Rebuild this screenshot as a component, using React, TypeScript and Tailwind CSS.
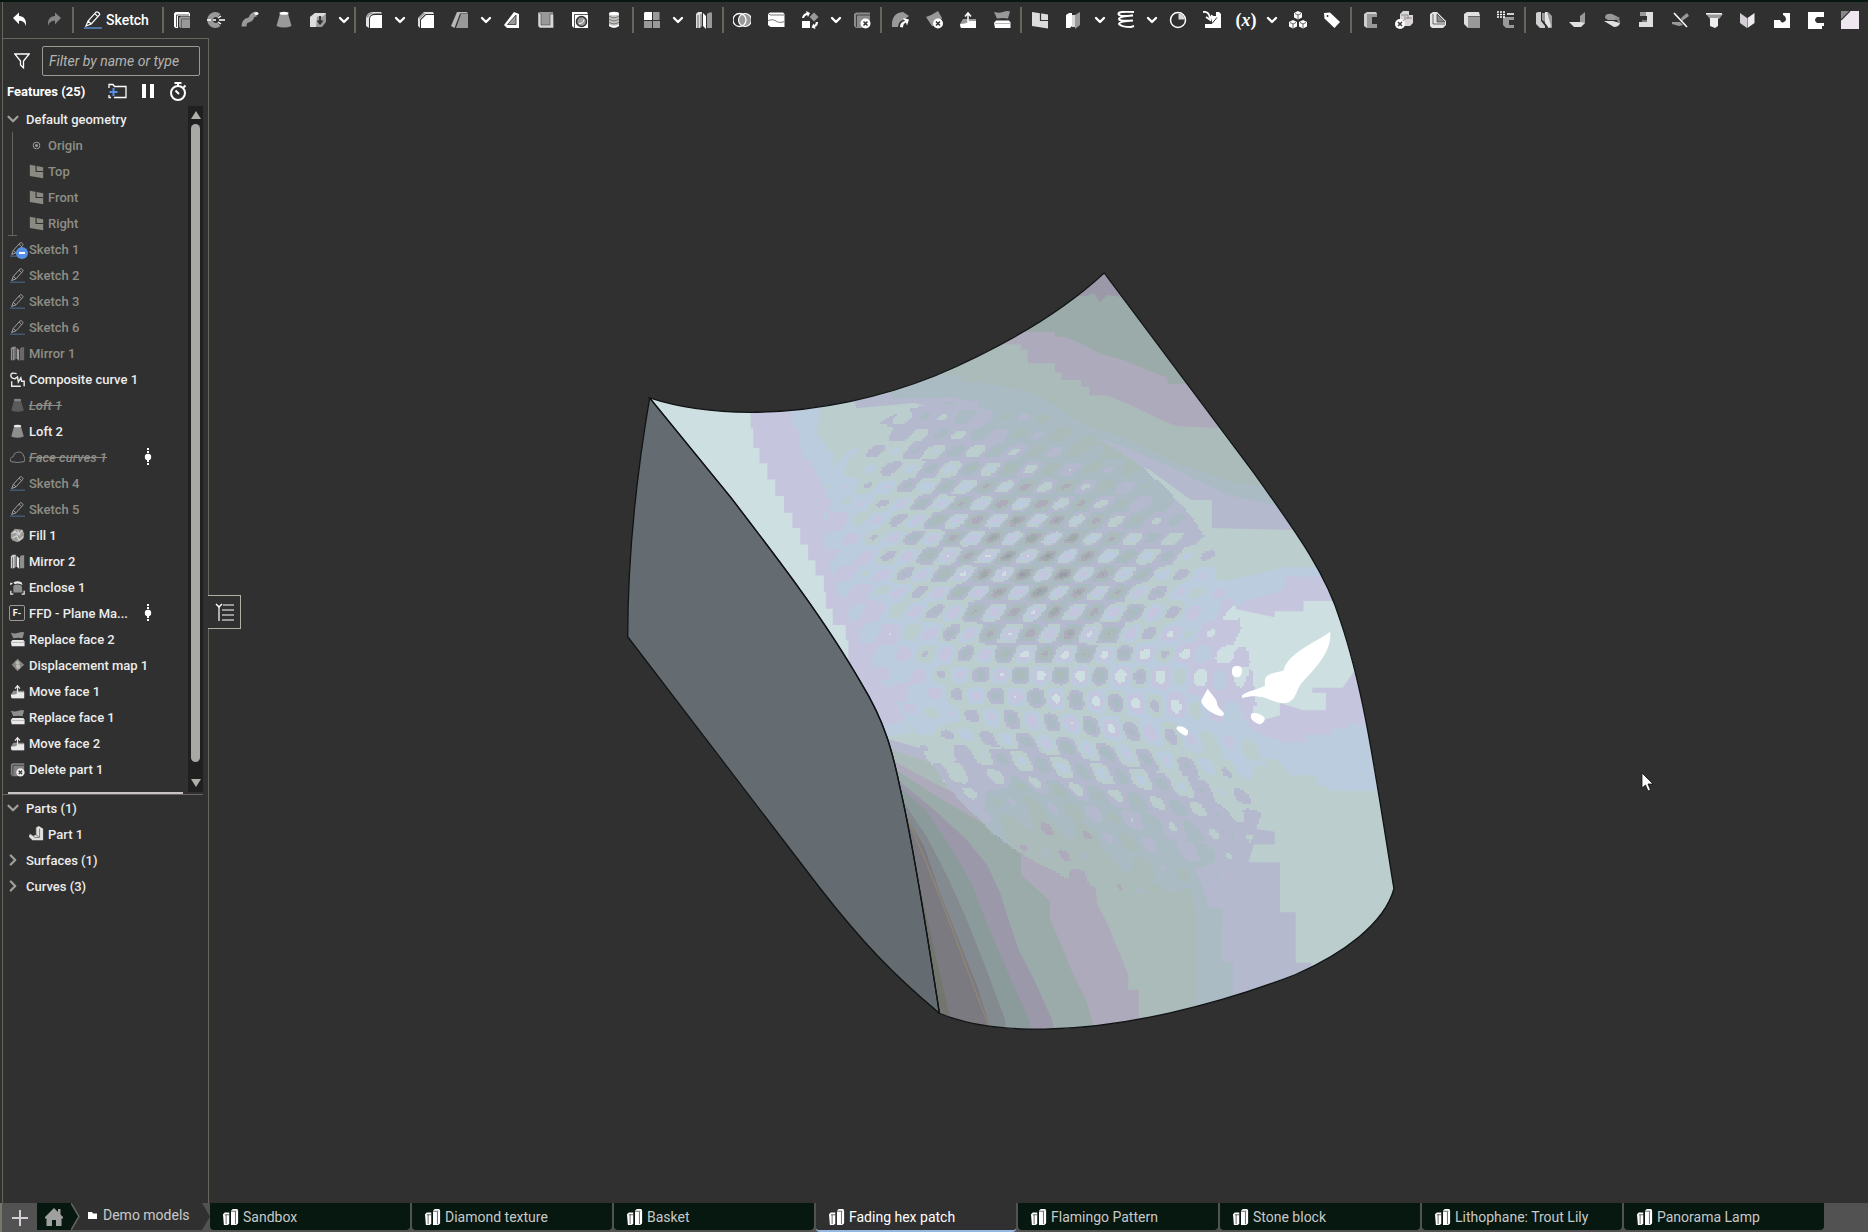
import React, { useState } from 'react';
import { clsx } from 'clsx';
import { ChevronDown, ChevronRight } from 'lucide-react';

const W = '#ffffff';
const G = '#999999';
const D = '#303030';

// All tool glyphs share an 18x18 grid
const glyphs: Record<string, React.ReactNode> = {
  undo: <path d="M2 7 8 1.500v3.600c5 .2 7.600 3.500 7 9.900-1.300-3.600-3-5.200-7-5.200v3.400z" fill={W} />,
  redo: <path d="M16 7 10 1.500v3.600c-5 .2-7.600 3.500-7 9.900 1.300-3.600 3-5.200 7-5.200v3.400z" fill="#858585" />,
  sketch: (
    <>
      <path d="M2 15 4 10 12 1.200q1-.8 2 0l1.200 1q.9 1 0 2L7.200 13z M4 10l3.200 3M10.800 2.600l3 3" fill="none" stroke={W} strokeWidth="1.200" />
      <path d="M0 17h18" stroke="#5b8fd9" strokeWidth="1.400" />
    </>
  ),
  extrude: (
    <>
      <path d="M1 2.500 2.500 1h13L17 2.500V5H5v12H2.500L1 15.500z" fill={W} />
      <path d="M3.500 16V4H16" fill="none" stroke={D} strokeWidth=".8" />
      <path d="M6 7 7.500 5.500H17V17H7.500L6 15.500z" fill={G} />
      <path d="M8.500 17V8H17" fill="none" stroke="#555" strokeWidth=".8" />
    </>
  ),
  revolve: (
    <>
      <path d="M13.500 3A8 8 0 1 0 13.500 15L10.500 11.500A3 3 0 1 1 10.500 6.500z" fill={G} />
      <path d="M0 9h4m2 0h3m3 0h6M11 7l3-2M11 11l3 2" stroke={W} strokeWidth="1.400" />
    </>
  ),
  sweep: (
    <>
      <path d="M3 15.500C3 7 8.500 10.500 10 7.500c.8-2 1-4 5.500-4.500" fill="none" stroke={G} strokeWidth="5" />
      <ellipse cx="15.500" cy="2.500" rx="2" ry="1.500" fill={W} />
    </>
  ),
  loft: (
    <>
      <path d="M5 2.500h8L16.500 15q-7.500 3-15 0z" fill={G} />
      <ellipse cx="9" cy="2.300" rx="4.500" ry="1.500" fill={W} />
    </>
  ),
  thicken: (
    <>
      <path d="M1 6 6 2h11v9l-4 5H1z" fill={G} />
      <path d="M1 6 6 2h11l-3 3.500H8L7 16H1z" fill="#dcdcdc" />
      <path d="M11 5v7M8.500 9.500 11 12.500l2.500-3" stroke={D} strokeWidth="1.800" fill="none" />
    </>
  ),
  fillet: (
    <>
      <path d="M5 17V8q0-4 5-4h7v13z" fill={W} />
      <path d="M1 15V7q1-6 7-6h8l1 1.500H10Q4.500 3 4 8v9z" fill="#e2e2e2" />
      <path d="M2.500 6.500Q3 2.500 7.500 2" stroke={G} strokeWidth="1.500" fill="none" />
    </>
  ),
  chamfer: (
    <>
      <path d="M4 17V9l5-5h8v13z" fill={W} />
      <path d="M1 15V7l6-6h9l1 2H8.500L3 8.500V17z" fill="#dedede" />
      <path d="M2 7.500 7.500 2" stroke={G} strokeWidth="1.200" />
    </>
  ),
  draft: (
    <>
      <path d="M5 17 10 3h7v14z" fill={G} />
      <path d="M0 15 6 1h10l1 1.500H9L3.500 17z" fill="#b8b8b8" />
    </>
  ),
  rib: (
    <>
      <path d="M1 14 11 1l5 2v14H4z" fill={W} />
      <path d="M4.500 13.500 13 4v9.500z" fill={G} stroke={D} strokeWidth=".8" />
    </>
  ),
  shell: (
    <>
      <path d="M1 1h15l1 16H3L1 15z" fill={G} />
      <path d="M4 3v11h9V3h3.500v14H3L1 15V1z" fill="#d6d6d6" stroke={D} strokeWidth=".5" />
    </>
  ),
  hole: (
    <>
      <path d="M1 1h15l1 2v14H3L1 15z" fill={W} />
      <path d="M3.500 17V3.500H17" stroke={D} strokeWidth=".8" fill="none" />
      <circle cx="10.500" cy="10.500" r="5" fill={G} stroke="#333" strokeWidth="1.500" />
      <path d="M8 12.500a5 5 0 0 0 5-4" stroke={W} strokeWidth="1" fill="none" />
    </>
  ),
  thread: (
    <>
      <path d="M4 2h10v13q-5 3.500-10 0z" fill="#c4c4c0" />
      <path d="M4 5.500q5 3 10 0M4 8.500q5 3 10 0M4 11.500q5 3 10 0" stroke="#777" strokeWidth="1" fill="none" />
      <ellipse cx="9" cy="2.500" rx="5" ry="1.800" fill={W} />
      <path d="M4 13.500q5 2.500 10 0V15q-5 3.500-10 0z" fill={W} />
    </>
  ),
  pattern: (
    <>
      <path d="M1 2 2 1h7v8H1z" fill={W} />
      <path d="M10 1h6.500v8H10zM1 10h8v7H1zM10 10h7v7h-7z" fill={G} />
    </>
  ),
  mirror: (
    <>
      <path d="M1 3 3 1h4v14l-2 2H1z" fill="#e0e0e0" />
      <path d="M3 4v13M6 3v13" stroke={D} strokeWidth=".7" />
      <path d="M8 2l3 3v13l-3-3z" fill={W} />
      <path d="M12 3l2-1.500h3V17h-5z" fill={G} />
    </>
  ),
  boolean: (
    <>
      <circle cx="12" cy="9" r="6.500" fill={G} />
      <circle cx="6.500" cy="9" r="6.500" fill="none" stroke={W} strokeWidth="1.300" />
      <circle cx="12" cy="9" r="6.500" fill="none" stroke={W} strokeWidth="1.200" />
    </>
  ),
  split: (
    <>
      <path d="M1 3 3 1.500h13L17.500 3v13H3.500L1 14z" fill={W} />
      <path d="M1 9.500q5-2 8 .5t8.500.5M3.500 4h14M3.500 4 1.500 3" stroke="#777" strokeWidth="1" fill="none" />
    </>
  ),
  transform: (
    <>
      <path d="M1 10h8v7H1z" fill={W} />
      <path d="M13 1.500 17.500 6 13 10.500 8.500 6z" fill={G} />
      <path d="M1 7Q2 2.500 5.500 2l-.5-2 4 2-2 4-.8-2Q3.500 4.500 3 7zM17 11q0 4-3 5l.5 2-4-1.500 2-4 .8 1.500q1.500-.5 1.500-3z" fill={W} />
    </>
  ),
  deletePart: (
    <>
      <path d="M1 3 3 1.500h14V10L9 17H3L1 15z" fill="#8b8b8b" />
      <path d="M3.500 16V4H17" stroke={D} strokeWidth=".8" fill="none" />
      <circle cx="12.500" cy="12.500" r="5" fill={W} />
      <path d="m10.500 10.500 4 4m0-4-4 4" stroke={D} strokeWidth="1.500" />
    </>
  ),
  modifyFillet: (
    <>
      <path d="M1 16Q0 2 12 1l6 4-5 4q-5 0-6 7z" fill={G} />
      <path d="M9 16Q9 11 14 10l-2-3 6 1.500-2 6-1-3q-3 1-3 5z" fill={W} />
    </>
  ),
  deleteFace: (
    <>
      <path d="M1 6Q7 4 13 0l4 7-4 8H7z" fill={G} />
      <circle cx="13" cy="12.500" r="5" fill={W} />
      <path d="m11 10.500 4 4m0-4-4 4" stroke={D} strokeWidth="1.500" />
    </>
  ),
  moveFace: (
    <>
      <path d="M1 13 4 8h13v9H3l-2-1z" fill={G} />
      <path d="M1 13q7 0 9-3h7v7H2z" fill={W} />
      <path d="M9 11V3M6 5.500 9 2l3 3.500" stroke={W} strokeWidth="1.500" fill="none" />
    </>
  ),
  replaceFace: (
    <>
      <path d="M1 1q5 1.500 9 0t7-.5l-2 7q-5-1-11 0z" fill={G} />
      <path d="M1 12 3 9.500h13l1.500 2V17H2z" fill={W} />
      <path d="M2 12.500h15" stroke={G} strokeWidth=".7" />
    </>
  ),
  plane: (
    <>
      <path d="M1 1l16 2.500v14L1 15z" fill="#dcdcdc" />
      <path d="M9.500 2v7.500H17.500" stroke={D} strokeWidth="1.200" fill="none" />
    </>
  ),
  planeSmall: (
    <>
      <path d="M1 1l16 3v13L1 14.500z" fill="#8a8a82" />
      <path d="M8.500 2.500v6.500H17" stroke={D} strokeWidth="1.400" fill="none" />
    </>
  ),
  section: (
    <>
      <path d="M1 4 4 2h3v13l-2 2H1z" fill={W} />
      <path d="M7 4h4v12H7z" fill="#d8d8d8" />
      <path d="m10 4 5-3v13l-5 4z" fill={G} />
    </>
  ),
  helix: (
    <path d="M17 1Q1 0 1.500 3T16 4.500M16 4.500Q2 5.500 2 8t14 1.500M16 9.500Q2 10.500 2 13q2 3 12 3l3-1" stroke={W} strokeWidth="2" fill="none" />
  ),
  stopwatch: (
    <>
      <circle cx="9" cy="9" r="7.500" fill="none" stroke={W} strokeWidth="1.500" />
      <path d="M9.500 2.500v6h6A6 6 0 0 0 9.500 2.500z" fill="#dcd6dc" />
    </>
  ),
  derived: (
    <>
      <path d="M9 5h4V1h3l2 2v14H2v-5l7 1z" fill={W} />
      <path d="M0 1q6-1 7 6M9 4 7.500 9 3 6" stroke={W} strokeWidth="1.800" fill="none" />
      <path d="M2 12.500h7l5-6" stroke={D} fill="none" strokeWidth="1" />
    </>
  ),
  group: (
    <>
      <path d="m9 0 4 2v4.500L9 8.500l-4-2V2zM4 9l4 2v4.500l-4 2-4-2V11zM14 9l4 2v4.500l-4 2-4-2V11z" fill={W} />
      <path d="m6 2.500 3 1.500 3-1.500M9 4v4M1 11.500 4 13l3-1.500M4 13v4M11 11.500l3 1.500 3-1.500M14 13v4" stroke="#555" strokeWidth=".9" fill="none" />
    </>
  ),
  tag: (
    <>
      <path d="M1 2 7 1.500 17 11 11.500 17 1.500 7.500z" fill={W} />
      <circle cx="4.500" cy="5" r="1" fill={D} />
    </>
  ),
  frame: (
    <>
      <path d="M4 4 6 2h10v4h-5v7h5v4H6l-2-2z" fill={G} />
      <path d="M3 3 6 1h9l1 2H6v14l-3-2z" fill="#cfcfcf" />
    </>
  ),
  cubes: (
    <>
      <path d="M5 3 8 0h6v4h4v8l-3 3H9V9H5z" fill="#d9d5d9" />
      <path d="M6 4h7v4M10 5v4M11 7h6" stroke="#777" strokeWidth=".8" fill="none" />
      <circle cx="5" cy="13" r="5" fill={W} />
      <path d="m3 11 4 4m0-4-4 4" stroke={D} strokeWidth="1.400" />
    </>
  ),
  bracket: (
    <>
      <path d="M1 3 4 1h4l9 9v4l-3 3H3l-2-2z" fill="#e4e4e4" />
      <path d="M8 3v8h8z" fill="#8a8a8a" stroke={D} strokeWidth=".7" />
      <path d="M4 3v10h12" stroke={D} strokeWidth=".7" fill="none" />
    </>
  ),
  box: (
    <>
      <path d="M1 3 4 1h12l1 4H5v12l-4-4z" fill="#e0e0e0" />
      <path d="M5 5.500h12V17H5z" fill={G} />
    </>
  ),
  frameGrid: (
    <>
      <path d="M6 6h11v3h-5v5h5v3H9L6 14z" fill={G} />
      <path d="M10 2h7v2h-7z" fill="#cfcfcf" />
      <path d="M0 1h8M0 3.500h8M0 6h8" stroke={W} strokeWidth="1.500" strokeDasharray="2 1" />
    </>
  ),
  sheet: (
    <>
      <path d="M1 2 3 1h3v9l4 5v2H5l-4-4z" fill="#cfcfcf" />
      <path d="M7 2h3v9l-3-2z" fill={G} />
      <path d="M10 1h3l4 4v12h-4z" fill={G} />
      <path d="M10 1h2l4 14-2 2-4-5z" fill="#e4e4e4" />
    </>
  ),
  flange: (
    <>
      <path d="M11 5 16 1v11l-5 4z" fill={G} />
      <path d="M0 11h11l5 1-4 4H5z" fill="#e0e0e0" />
    </>
  ),
  hem: (
    <>
      <path d="M2 7q0-5 7-4l8 4-3 2H5z" fill={G} />
      <path d="M1 10h9l7 2q-1 4-6 4z" fill="#e0e0e0" />
      <path d="M12 7q5 2 4 5" stroke="#888" strokeWidth="2" fill="none" />
    </>
  ),
  jog: (
    <>
      <path d="M3 1h7v4H3z" fill={G} />
      <path d="M9 1h7v15H2v-5h8V5H9z" fill="#dedede" />
      <path d="M5 10h5" stroke="#777" strokeWidth="2" />
    </>
  ),
  bend: (
    <>
      <path d="M10 7 16 2l2 3-7 5zM1 11h8l3 3-4 1-7-2z" fill={G} />
      <path d="m3 2 13 14" stroke={W} strokeWidth="1.500" />
    </>
  ),
  form: (
    <>
      <path d="M1 3h17l-4 5H5z" fill="#999" />
      <path d="M1 2h16v1.500H1zM5 7h8v8l-3 2-5-2z" fill="#eee" />
    </>
  ),
  loftSheet: (
    <>
      <path d="m1 2 7 5v10l-7-5z" fill="#d4cfd4" />
      <path d="m8.500 7 7-5v10l-7 5z" fill="#efeaef" />
    </>
  ),
  corner: <path d="M1 9h6q2 5 6 0 0-4-3-5V2h7v15H1z" fill={W} />,
  relief: <path d="M1 1h16v5h-7q-4 3 0 6h7v3h-2v3H1z" fill={W} />,
  tab: (
    <>
      <path d="M0 0h18v18H0z" fill="#efe7ef" />
      <path d="M0 0h9L0 9z" fill="#888" />
      <path d="M0 9 9 0" stroke={D} strokeWidth="1.200" />
    </>
  ),
  // feature list only
  origin: (
    <>
      <circle cx="9" cy="9" r="4" fill="none" stroke="#9a9a92" strokeWidth="1.200" />
      <circle cx="9" cy="9" r="1.800" fill="#9a9a92" />
    </>
  ),
  composite: (
    <path d="M8 2Q1 0 1 4t5 4l3-2 1 6 3-5 1 4h3v6M2 11v6h11" fill="none" stroke={W} strokeWidth="1.700" />
  ),
  faceCurves: <path d="M1 14Q-1 9 4 8q0-4 4-5 6-2 8 3 3 5 1 8-7 2-16 0z" fill="none" stroke={W} strokeWidth="1.200" />,
  fill: (
    <>
      <path d="M1 6 6 1l9 1 2 5-1 6-7 4-6-2-2-3z" fill="#a9a7a4" />
      <path d="m2 7 4-3 4 4 5-5M3 12l5-3 3 6 5-5M9 3l3 6" stroke="#e8e4e8" strokeWidth="1.300" fill="none" />
    </>
  ),
  enclose: (
    <>
      <path d="M4 7q5-3 10 0l1 8H4z" fill={G} />
      <path d="M4 3q5-3 10 0l1 3q-5-3-9-1z" fill={W} />
      <path d="M1 6V4h2M1 13v4h3M17 13v4h-3" fill="none" stroke={W} strokeWidth="1.500" />
    </>
  ),
  displacement: (
    <>
      <path d="M9 1 17 8 9 16 2 8z" fill="#8f8f8c" />
      <path d="m9 3 3 3-3 2-3-2zM7 8h5v5H8z" fill="#c9c9c4" />
    </>
  ),
  part: (
    <>
      <path d="M9 2 12 0l5 3v13H5l-4-4 1-3 4 2 3-1z" fill="#e0e0dc" />
      <path d="M9 2v8l3 2M3 9l5 4h5V3" stroke="#666" strokeWidth=".9" fill="none" />
    </>
  ),
  studio: (
    <>
      <path d="M0 6 2 4h5v13l-2 1H1z" fill={W} />
      <path d="M9 2l2-2h5l1 2v14l-2 2H9z" fill={W} />
      <path d="M2 6.500h5M3.500 6.500V17M9 2.500h6M14 3v14" stroke="#333" strokeWidth=".8" />
    </>
  ),
};

const Glyph = ({ name, className }: { name: string; className?: string }) => (
  <svg viewBox="0 0 18 18" className={clsx('shrink-0', className)} aria-hidden="true">
    {glyphs[name]}
  </svg>
);

// "|" is a separator, "v" a menu arrow, anything else a glyph
const tools = (
  '| extrude revolve sweep loft thicken v | fillet v chamfer draft v rib shell hole thread | pattern v mirror | ' +
  'boolean split transform v deletePart | modifyFillet deleteFace moveFace replaceFace | plane section v helix v ' +
  'stopwatch derived variable v group tag | frame cubes bracket box frameGrid | sheet flange hem jog bend form ' +
  'loftSheet corner relief tab'
).split(' ');

const Separator = () => <span className="mx-px h-[26px] w-[2px] shrink-0 bg-[#66665e]" />;

const ToolButton = ({ name }: { name: string }) => (
  <button type="button" aria-label={name} className="flex h-8 w-[34px] shrink-0 items-center justify-center">
    {name === 'variable' ? (
      <span className="font-['Liberation_Serif',serif] text-lg leading-none font-bold text-white">
        (<i>x</i>)
      </span>
    ) : (
      <Glyph name={name} className="h-[18px] w-[18px]" />
    )}
  </button>
);

const Toolbar = () => (
  <header className="flex h-9 shrink-0 items-center overflow-hidden bg-[#303030] pl-[2px]">
    <span className="h-full w-px shrink-0 bg-[#66665e]" />
    <ToolButton name="undo" />
    <ToolButton name="redo" />
    <Separator />
    <button type="button" className="flex h-8 w-[86px] shrink-0 items-center gap-1 pl-[9px] text-sm font-medium text-white">
      <Glyph name="sketch" className="h-[18px] w-[18px]" />
      Sketch
    </button>
    {tools.map((t, i) => {
      if (t === '|') return <Separator key={i} />;
      if (t === 'v') {
        return (
          <button key={i} type="button" aria-label="More" className="flex h-8 w-[18px] shrink-0 items-center justify-center">
            <ChevronDown className="h-4 w-4 text-white" strokeWidth={3.5} />
          </button>
        );
      }
      return <ToolButton key={i} name={t} />;
    })}
  </header>
);

interface Feature {
  name: string;
  icon: string;
  hidden?: boolean;
  suppressed?: boolean;
  marker?: boolean;
  badge?: boolean;
}

const features: Feature[] = [
  { name: 'Sketch 1', icon: 'sketch', hidden: true, badge: true },
  { name: 'Sketch 2', icon: 'sketch', hidden: true },
  { name: 'Sketch 3', icon: 'sketch', hidden: true },
  { name: 'Sketch 6', icon: 'sketch', hidden: true },
  { name: 'Mirror 1', icon: 'mirror', hidden: true },
  { name: 'Composite curve 1', icon: 'composite' },
  { name: 'Loft 1', icon: 'loft', suppressed: true },
  { name: 'Loft 2', icon: 'loft' },
  { name: 'Face curves 1', icon: 'faceCurves', suppressed: true, marker: true },
  { name: 'Sketch 4', icon: 'sketch', hidden: true },
  { name: 'Sketch 5', icon: 'sketch', hidden: true },
  { name: 'Fill 1', icon: 'fill' },
  { name: 'Mirror 2', icon: 'mirror' },
  { name: 'Enclose 1', icon: 'enclose' },
  { name: 'FFD - Plane Ma...', icon: 'ffd', marker: true },
  { name: 'Replace face 2', icon: 'replaceFace' },
  { name: 'Displacement map 1', icon: 'displacement' },
  { name: 'Move face 1', icon: 'moveFace' },
  { name: 'Replace face 1', icon: 'replaceFace' },
  { name: 'Move face 2', icon: 'moveFace' },
  { name: 'Delete part 1', icon: 'deletePart' },
];

const FeatureRow = ({ feature }: { feature: Feature }) => {
  const dim = feature.hidden || feature.suppressed;
  return (
    <li className="flex h-[26px] items-center pr-9 pl-[6px]">
      <button type="button" className="flex min-w-0 flex-1 items-center gap-1 text-left whitespace-nowrap">
        <span className="relative flex h-4 w-4 shrink-0 items-center justify-center">
          {feature.icon === 'ffd' ? (
            <span className="flex h-4 w-4 items-center justify-center rounded-xs border border-[#9a9a92] text-[9px] leading-none font-bold text-white">
              F-
            </span>
          ) : (
            <Glyph
              name={feature.icon}
              className={clsx('h-[15px] w-[15px]', feature.suppressed ? 'opacity-40' : feature.hidden ? 'opacity-55' : 'opacity-90')}
            />
          )}
          {feature.badge && (
            <span className="absolute top-[6px] left-[7px] flex h-3 w-3 items-center justify-center rounded-full bg-[#5590e6]">
              <span className="h-[2px] w-[6px] bg-white" />
            </span>
          )}
        </span>
        <span className={clsx(dim ? 'text-[#8e8e86]' : 'text-[#ececec]', feature.suppressed && 'italic line-through')}>
          {feature.name}
        </span>
      </button>
      {feature.marker && (
        <svg viewBox="0 0 8 20" className="h-5 w-2 shrink-0" aria-hidden="true">
          <path d="M4 1v18" stroke="#fff" strokeWidth="2" strokeDasharray="2 1" />
          <circle cx="4" cy="10" r="3.200" fill="#fff" />
        </svg>
      )}
    </li>
  );
};

const SectionToggle = ({ label, open, onClick }: { label: string; open: boolean; onClick?: () => void }) => {
  const Chevron = open ? ChevronDown : ChevronRight;
  return (
    <button type="button" onClick={onClick} aria-expanded={open} className="flex h-[26px] w-full items-center gap-1 pl-px text-[#ececec]">
      <Chevron className="h-[18px] w-[18px] text-[#a0a098]" strokeWidth={3} />
      {label}
    </button>
  );
};

const FeaturePanel = () => {
  const [filter, setFilter] = useState('');
  const [partsOpen, setPartsOpen] = useState(true);

  return (
    <aside className="flex w-[207px] shrink-0 flex-col border-t border-r border-l border-[#66665e] text-[13px] leading-none font-medium text-white">
      <div className="flex items-center gap-3 pt-[7px] pr-2 pl-[11px]">
        <svg viewBox="0 0 16 16" className="h-4 w-4 shrink-0" aria-hidden="true">
          <path d="M.8 1h14.400L9.500 8v6.800L6.500 12V8z" fill="none" stroke="#fff" strokeWidth="1.300" />
        </svg>
        <input
          type="text"
          aria-label="Filter features"
          value={filter}
          onChange={(e) => setFilter(e.target.value)}
          placeholder="Filter by name or type"
          className="h-[30px] min-w-0 flex-1 rounded-xs border border-[#9a9a92] bg-transparent px-[6px] text-sm font-normal italic placeholder:text-[#b4b4b0] focus:outline-none"
        />
      </div>

      <div className="flex h-[30px] items-center pl-1">
        <h2 className="w-[101px] font-bold">Features (25)</h2>
        <button type="button" aria-label="Add folder" className="w-[33px]">
          <svg viewBox="0 0 19 16" className="h-4 w-[19px]" aria-hidden="true">
            <path d="M1 5V1.500h4l1.500 2H18v11H6M1 12v2.500h2" fill="none" stroke="#fff" strokeWidth="1.300" />
            <path d="M5.500 5v8M1.500 9h8" stroke="#5590e6" strokeWidth="2" />
          </svg>
        </button>
        <button type="button" aria-label="Pause" className="w-7">
          <svg viewBox="0 0 14 14" className="h-[14px] w-[14px]" aria-hidden="true">
            <path d="M1 0h4v14H1zM9 0h4v14H9z" fill="#fff" />
          </svg>
        </button>
        <button type="button" aria-label="Regeneration time">
          <svg viewBox="0 0 18 19" className="h-[19px] w-[18px]" aria-hidden="true">
            <circle cx="9" cy="11" r="7" fill="none" stroke="#fff" strokeWidth="2" />
            <path d="M5.500 1h7M9 1v3M14.500 5.500 16.500 3.500M6.500 8.500 10 12" stroke="#fff" strokeWidth="2" />
          </svg>
        </button>
      </div>

      <div className="flex pr-[5px]">
        <div className="min-w-0 flex-1 pb-[10px]">
          <SectionToggle label="Default geometry" open />
          <ul className="relative ml-[9px] border-l border-[#66665e] text-[#8e8e86]">
            {['Origin', 'Top', 'Front', 'Right'].map((name) => (
              <li key={name} className="flex h-[26px] items-center gap-1 pl-4">
                <Glyph name={name === 'Origin' ? 'origin' : 'planeSmall'} className="h-[15px] w-[15px]" />
                {name}
              </li>
            ))}
            <li className="absolute bottom-0 -left-[5px] h-px w-[9px] bg-[#66665e]" />
          </ul>
          <ul>
            {features.map((f) => (
              <FeatureRow key={f.name} feature={f} />
            ))}
          </ul>
        </div>
        <div className="flex w-[15px] shrink-0 flex-col items-center bg-[#202020] py-[5px]">
          <svg viewBox="0 0 10 8" className="h-2 w-[10px]" aria-hidden="true"><path d="M5 0l5 8H0z" fill="#b0b0aa" /></svg>
          <span className="my-[5px] w-[9px] flex-1 rounded-full bg-[#a8a8a4]" />
          <svg viewBox="0 0 10 8" className="mt-3 h-2 w-[10px]" aria-hidden="true"><path d="M5 8l5-8H0z" fill="#b0b0aa" /></svg>
        </div>
      </div>
      <div className="mr-[5px] border-b border-[#66665e] pr-5 pl-[5px]">
        <div className="h-[2px] bg-[#c9c3c9]" />
      </div>

      <div>
        <SectionToggle label="Parts (1)" open={partsOpen} onClick={() => setPartsOpen(!partsOpen)} />
        {partsOpen && (
          <div className="flex h-[26px] items-center gap-1 pl-[25px] text-[#ececec]">
            <Glyph name="part" className="h-4 w-4" />
            Part 1
          </div>
        )}
        <SectionToggle label="Surfaces (1)" open={false} />
        <SectionToggle label="Curves (3)" open={false} />
      </div>
    </aside>
  );
};

// Shading levels from brightest to darkest
const shade = [
  '#ffffff', '#cddfe0', '#c5c5dd', '#bbccde', '#bbcdcd', '#b4b9cd', '#aabbc4', '#abbbba',
  '#adabbb', '#9babaa', '#9b99a9', '#8b9a9a', '#838a90', '#7b7a80', '#72766f',
];

const bands: [number, string][] = [
  [3, 'M60 250H430L415 360 445 400V470L455 540 490 590V640L520 690 560 760 600 830 635 850V920L600 945 545 955 60 900z'],
  [2, 'M60 250H368V350H378L388 410H400L430 470V525H455L480 600 490 650 505 700H515L530 740 555 780 600 850V915L548 932 60 900z'],
  [1, 'M60 250H288V350H293V388H305V418H320V450H335V482H352V515H368V545H383V577H398V608H412V638H428V670H432V703H445V735H470V765H475V810L60 800z'],
  [5, 'M490 310L600 300 700 325 850 350 950 400 1050 430 1130 490H1170V545L1290 548 1400 550 1400 0 400 0z'],
  [6, 'M560 292L680 288 780 315 900 352 1000 385 1090 425 1200 480 1290 500 1400 500V0H500z'],
  [7, 'M630 245H690V258H720L830 280 930 345 1010 372 1110 420 1210 455 1260 462 1400 460V0H500z'],
  [8, 'M760 185H805V195H818V222H870V240H882V255H920V268H935V285H970L1010 302 1050 322 1100 345 1200 350 1300 0 700 0z'],
  [9, 'M790 160H870V170H890L925 186 960 205 1000 215 1045 235 1085 250V262H1150L1200 0H700z'],
  [10, 'M900 90H930L945 85 955 103 970 88 1000 92V0H880z'],
  [3, 'M1080 760L1190 650 1310 622 1400 622 1500 1060H1393V1050H1370V1030H1320L1295 1000 1230 985 1060 930z'],
  [2, 'M1110 790L1230 690 1310 665V640H1420L1500 930H1430V938H1400V950H1350V965H1310L1260 950 1090 900z'],
  [1, 'M1090 830L1130 760 1200 700 1290 720V708H1345V688H1430L1460 810 1440 828 1420 858H1362V868H1388V902H1345L1300 888V912L1240 930 1160 905z'],
  [5, 'M1050 1130L1210 1130 1290 1140V1165H1250L1240 1200H1300V1298H1330V1397H1360V1600H1190V1330L1150 1300z'],
  [6, 'M1050 1190L1140 1210 1165 1290H1190V1395H1210V1600H1080z'],
  [5, 'M540 955L640 985 730 1010 800 1055 500 1040z'],
  [7, 'M545 975L640 1008 740 1028 800 1075 860 1095 900 1130 1000 1150 1090 1190 1130 1240 1140 1310V1600H500z'],
  [8, 'M555 998L640 1045 700 1075 760 1092 830 1110 850 1145 800 1160 860 1195 945 1215 950 1280 970 1320 990 1370 1010 1420V1450H1030V1600H500z'],
  [9, 'M560 1015L640 1068 700 1105 760 1140 805 1175V1225L860 1275V1310L885 1370 905 1420 930 1470 965 1600H500z'],
  [10, 'M565 1035L640 1098 700 1155 740 1205 765 1260 780 1310 800 1370 830 1430 865 1510 880 1600H500z'],
  [11, 'M570 1050L625 1100 670 1170 710 1240 740 1320 780 1415 820 1510 840 1600H500z'],
  [12, 'M575 1075L625 1150 665 1230 700 1310 735 1400 775 1510V1600H500z'],
  [13, 'M580 1100L620 1170 650 1260 685 1350 720 1440 745 1520V1600H500z'],
  [14, 'M590 1150L610 1240 630 1330 650 1420 672 1515V1600H500z'],
];

// Mean shading level sampled over the embossed area: x, y, level
const samples = [
  [430, 340, 3.4], [430, 430, 3], [440, 530, 2.4], [480, 620, 2.5], [500, 690, 2.3], [540, 760, 2.4], [590, 860, 2.4],
  [630, 920, 3], [500, 330, 4], [560, 320, 4.6], [620, 300, 5], [700, 310, 5.4], [780, 320, 6], [870, 340, 6.4],
  [950, 370, 6.8], [1030, 400, 6.6], [1100, 440, 6.3], [1150, 500, 5.2], [1190, 570, 4.3], [1230, 630, 3.4], [520, 400, 4.2],
  [520, 500, 3.5], [560, 600, 3.6], [600, 700, 3.5], [640, 800, 3.3], [640, 460, 4.5], [640, 600, 4.5], [700, 530, 5.1],
  [720, 400, 5], [800, 450, 5.6], [900, 430, 5.9], [800, 560, 5.7], [900, 560, 5.8], [860, 650, 5.9], [960, 640, 5.3],
  [760, 650, 5.3], [760, 740, 4.8], [880, 740, 5.2], [980, 740, 4.6], [1030, 500, 5.6], [1060, 600, 4.7], [1080, 700, 3.9],
  [700, 820, 3.9], [800, 840, 3.9], [900, 840, 3.7], [1000, 840, 3.2], [1060, 790, 3], [1130, 760, 2.4], [1150, 680, 3],
  [1210, 720, 1.600], [1240, 760, 1.200], [1200, 800, 1.600], [1150, 850, 2.2], [1240, 870, 1.900], [1280, 800, 1], [1280, 900, 1.500],
  [1100, 880, 2.6], [1200, 930, 2.900], [640, 960, 4.2], [720, 920, 3.8], [850, 930, 3.8], [980, 930, 3.5], [1100, 960, 3.6],
  [1230, 990, 3.4], [1300, 960, 2.6], [700, 1000, 4.6], [800, 1010, 4.7], [900, 1010, 4.7], [1000, 1030, 4.6], [1120, 1040, 4.5],
  [1230, 1060, 4.2], [1330, 1060, 4], [800, 1080, 6.3], [880, 1100, 6.3], [1000, 1090, 5.6], [1100, 1110, 5.3], [1220, 1130, 4.9],
  [1300, 1120, 4.2], [830, 1140, 7.2], [900, 1160, 7], [1000, 1170, 6.3], [1120, 1180, 5.6], [1220, 1200, 5], [920, 1230, 7.5],
  [1010, 1240, 7], [1100, 1240, 6.3],
];

const rowY = [292, 325, 358, 392, 427, 460, 495, 528, 562, 598, 634, 668, 708, 750, 790, 832, 885, 937, 985, 1030, 1070, 1112, 1152, 1200, 1245, 1290, 1340];

const clamp = (v: number, lo: number, hi: number) => Math.min(hi, Math.max(lo, v));

const reach = (x: number, y: number) =>
  Math.hypot((x - (805 + (y - 600) * 0.36)) / (y > 900 ? 375 + (y - 900) * 0.2 : 375), (y - 640) / (y > 640 ? 620 : 345));

// Mean level plus the dimple lattice, which fades out with distance from the centre
const levelAt = (x: number, y: number, d: number) => {
  let sum = 0;
  let weight = 0;
  for (const [px, py, level] of samples) {
    const w = 1 / (((px - x) ** 2 + (py - y) ** 2) ** 1.6 + 1);
    sum += w * level;
    weight += w;
  }
  const ty = y - (x - 980) * 0.16 * clamp((y - 820) / 160, 0, 1);
  let i = 0;
  while (i < rowY.length - 2 && rowY[i + 1] <= ty) i++;
  const exact = i + (ty - rowY[i]) / (rowY[i + 1] - rowY[i]);
  const row = Math.round(exact);
  const lean = -26 + 46 * clamp((y - 700) / 280, 0, 1);
  const u = (x - 660 - 29.5 * (row - 5) - lean * (exact - row)) / 76.5;
  const along = Math.abs(Math.cos(Math.PI * exact)) ** 1.2;
  const amp = (y > 640 ? 3.9 : 4.3) * Math.exp(-2 * d * d);
  return sum / weight + amp * Math.cos(2 * Math.PI * u) * along;
};

const CELL = 4;

const buildRelief = () => {
  const paths: string[] = shade.map(() => '');
  for (let y = 290; y < 1270; y += CELL) {
    let start = 0;
    let current = -1;
    for (let x = 400; x <= 1360; x += CELL) {
      const d = reach(x, y);
      const level = d < 1 && x < 1360 ? clamp(Math.round(levelAt(x, y, d)), 1, 10) : -1;
      if (level !== current) {
        if (current >= 0) paths[current] += `M${start} ${y}H${x}v${CELL}H${start}z`;
        start = x;
        current = level;
      }
    }
  }
  return paths;
};

const relief = buildRelief();

const seam = 'C625 1340 602 1180 575 1060 C560 985 545 925 500 850 C430 725 340 605 250 485 L95 290';
const topFace = `M95 290C160 312 230 319 300 318C420 316 540 288 640 247C770 190 880 125 964 45L1250 437C1340 565 1390 640 1415 725C1460 860 1480 1010 1518 1252C1500 1320 1420 1380 1330 1420C1180 1480 1000 1525 850 1527C770 1528 700 1518 649 1496${seam}z`;
const sideFace = `M649 1496${seam}C70 440 53 600 53 758C180 930 300 1090 420 1250C500 1355 560 1420 649 1496z`;

const Viewport = () => (
  <main className="relative min-w-0 flex-1">
    <svg viewBox="0 0 1659 1165" className="h-full w-full" role="img" aria-label="Fading hex patch model">
      <defs>
        <clipPath id="top-face">
          <path d={topFace} />
        </clipPath>
      </defs>
      <g transform="translate(391 212) scale(.523 .5102)">
        <g clipPath="url(#top-face)">
          <rect width="1568" height="1568" fill={shade[4]} />
          {bands.map(([level, d], i) => (
            <path key={i} d={d} fill={shade[level]} />
          ))}
          <path d="M590 1120C640 1230 690 1380 745 1525" fill="none" stroke="#8e8577" strokeWidth="3" />
          {relief.map((d, level) => d && <path key={level} d={d} fill={shade[level]} shapeRendering="crispEdges" />)}
          <g fill="#fff">
            <path d="M1396 748C1400 785 1372 815 1342 848C1330 862 1332 885 1310 888C1285 890 1270 866 1228 878C1222 866 1262 862 1272 853C1266 828 1290 830 1307 824C1314 790 1370 768 1396 748z" />
            <path d="M1162 860C1168 870 1180 880 1180 890C1182 902 1200 906 1190 914C1172 912 1148 894 1150 882z" />
            <path d="M1210 818q8-6 16 0 4 10-2 18-8 4-14-2-4-8 0-16z" />
            <path d="M1246 908q14-2 24 8 4 8-8 14-14-4-18-14z" />
            <path d="M1104 934q12-2 20 8 2 8-4 10-12-4-18-14z" />
          </g>
        </g>
        <path d={sideFace} fill="#646c72" />
        <path d={sideFace} fill="none" stroke="#101414" strokeWidth="2.500" />
        <path d={topFace} fill="none" stroke="#101414" strokeWidth="2.500" />
      </g>
      {/* mouse pointer */}
      <path d="M1433 735v15l3.500-3 2.500 6 2.500-1-2.500-6h5z" fill="#fff" stroke="#111" strokeWidth=".8" />
    </svg>
    <button type="button" aria-label="Feature list" className="absolute top-[557px] -left-px flex h-[34px] w-[33px] items-center justify-center border border-l-0 border-[#b0b0a4] bg-[#303030]">
      <svg viewBox="0 0 19 19" className="h-[19px] w-[19px]" aria-hidden="true">
        <path d="M1 1l3 3 3-3" fill="none" stroke="#fff" strokeWidth="1.500" />
        <path d="M4 4v14M8 2h11M7 7h12M7 12h12M7 17h12" stroke="#fff" strokeWidth="1.200" />
      </svg>
    </button>
  </main>
);

const tabs = ['Sandbox', 'Diamond texture', 'Basket', 'Fading hex patch', 'Flamingo Pattern', 'Stone block', 'Lithophane: Trout Lily', 'Panorama Lamp'];

const TabBar = () => {
  const [active, setActive] = useState('Fading hex patch');
  return (
    <footer className="flex h-[29px] shrink-0 overflow-hidden border-l-2 border-[#77776c] bg-[#525252] text-sm text-[#c9c9c9]">
      <button type="button" aria-label="New tab" className="flex w-[35px] shrink-0 items-center justify-center">
        <svg viewBox="0 0 16 16" className="h-4 w-4" aria-hidden="true"><path d="M8 0v16M0 8h16" stroke="#d4cfd4" strokeWidth="2" /></svg>
      </button>
      <nav className="flex w-[173px] shrink-0">
        <a href="#home" aria-label="Home" className="relative z-10 flex h-[27px] w-[34px] shrink-0 items-center justify-center bg-[#06180f]">
          <svg viewBox="0 0 18 18" className="h-[18px] w-[18px]" aria-hidden="true">
            <path d="M9 0l4 4V1h2.500v5.500L18 9v1.500h-1.500V18H11v-6H7v6H1.500v-7.500H0V9z" fill="#a0a0a0" />
          </svg>
          <svg viewBox="0 0 9 27" className="absolute top-0 left-[34px] h-[27px] w-[9px]" aria-hidden="true">
            <path d="M0 0 8 13.500 0 27z" fill="#06180f" />
            <path d="M0 0 8 13.500 0 27" fill="none" stroke="#66665e" strokeWidth="1.500" />
          </svg>
        </a>
        <a href="#demo" className="flex h-[27px] flex-1 items-center gap-[6px] bg-[#303030] pb-[3px] pl-[17px] whitespace-nowrap">
          <svg viewBox="0 0 9 7" className="h-[7px] w-[9px]" aria-hidden="true"><path d="M0 0h4l1 1.500h4V7H0z" fill="#fff" /></svg>
          Demo models
        </a>
        <svg viewBox="0 0 8 27" className="h-[27px] w-2 shrink-0" aria-hidden="true"><path d="M0 0l8 13.500L0 27z" fill="#303030" /></svg>
      </nav>
      <div className="flex gap-[2px]">
        {tabs.map((tab) => (
          <button
            key={tab}
            type="button"
            onClick={() => setActive(tab)}
            className={clsx(
              'flex w-[200px] shrink-0 items-center gap-1 rounded-b pl-[13px] text-left whitespace-nowrap',
              tab === active ? 'h-[29px] border-b-2 border-[#94b8e0] bg-[#303030] text-white' : 'h-[27px] bg-[#06180f]',
            )}
          >
            <Glyph name="studio" className="h-4 w-4" />
            {tab}
          </button>
        ))}
      </div>
    </footer>
  );
};

const App = () => (
  <div className="flex h-screen flex-col overflow-hidden border-t-2 border-[#06180f] bg-[#303030] font-[Roboto,'Liberation_Sans',sans-serif]">
    <Toolbar />
    <div className="flex min-h-0 flex-1 pl-[2px]">
      <FeaturePanel />
      <Viewport />
    </div>
    <TabBar />
  </div>
);

export default App;
